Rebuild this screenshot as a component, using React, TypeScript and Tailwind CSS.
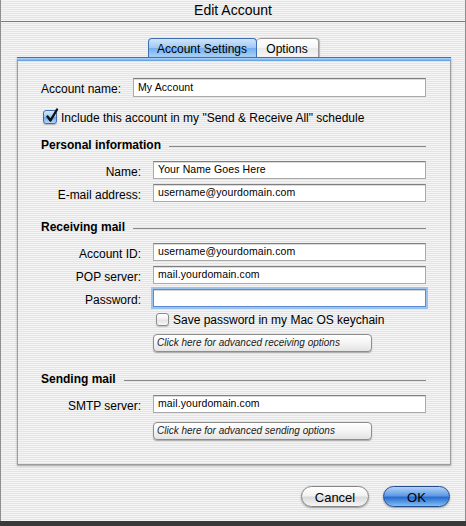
import React from "react";

function Field({ value, wide, focus }: { value?: string; wide?: boolean; focus?: boolean }) {
  const base =
    "bg-white border pl-[4px] text-[10.5px] leading-[15px] tracking-[0.1px] whitespace-nowrap overflow-hidden";
  const size = wide ? "w-[293px] h-[19px] pt-[1px]" : "w-[273px] h-[18px]";
  const look = focus
    ? "border-[#5a8ad0] shadow-[0_0_0_2px_#9cc3ee,inset_0_1px_0_#d5d5d5]"
    : "border-[#aaaaaa] border-t-[#7f7f7f] shadow-[inset_0_1px_0_#dcdcdc]";
  return <div className={`${base} ${size} ${look}`}>{value}</div>;
}

function Row({ label, children }: { label: string; children: React.ReactNode }) {
  return (
    <div className="flex items-center">
      <div className="w-[100px] text-right text-[12px] leading-[14px] pt-[3px]">{label}</div>
      <div className="ml-[12px]">{children}</div>
    </div>
  );
}

function Header({ text }: { text: string }) {
  return (
    <div className="flex items-center w-[385px] h-[14px]">
      <div className="text-[12px] font-bold leading-[14px] whitespace-nowrap pt-[1px]">{text}</div>
      <div className="flex-1 ml-[8px] mt-[5px] border-t border-[#8a8a8a]" />
    </div>
  );
}

function CheckedBox() {
  return (
    <div className="relative w-[14px] h-[14px] rounded-[3px] border border-[#3f6eae] bg-[linear-gradient(180deg,#d6e9fc_0%,#a3cbf3_45%,#6fa9ea_55%,#b6d9f9_100%)] shadow-[0_1px_1px_rgba(0,0,0,0.25)]">
      <svg className="absolute left-[1px] top-[-3px]" width="14" height="15" viewBox="0 0 14 15">
        <path d="M2.5 8.5 L5.5 12.5 L12 1.5" fill="none" stroke="#111" strokeWidth="2.4" strokeLinecap="round" strokeLinejoin="round" />
      </svg>
    </div>
  );
}

function EmptyBox() {
  return (
    <div className="w-[13px] h-[13px] rounded-[3px] border border-[#8c8c8c] bg-[linear-gradient(180deg,#ffffff_0%,#f1f1f1_45%,#e3e3e3_55%,#f8f8f8_100%)] shadow-[0_1px_1px_rgba(0,0,0,0.2)]" />
  );
}

function BevelButton({ text }: { text: string }) {
  return (
    <div className="w-[219px] h-[18px] rounded-[4px] border border-[#8d8d8d] bg-[linear-gradient(180deg,#ffffff_0%,#f4f4f4_50%,#e4e4e4_100%)] shadow-[0_1px_1px_rgba(0,0,0,0.3)] pl-[3px] text-[10px] italic leading-[16px] text-[#1a1a1a] whitespace-nowrap">
      {text}
    </div>
  );
}

export default function App() {
  const stripes =
    "bg-[image:repeating-linear-gradient(180deg,#f5f5f5_0px,#f5f5f5_1px,#e4e4e4_1px,#e4e4e4_2px)]";
  return (
    <div className="w-[466px] h-[526px] overflow-hidden bg-[#3a3a3a] font-['Liberation_Sans',Arial,sans-serif] text-black">
      <div className={`h-[521px] flex flex-col border-l border-r border-[#8e8e8e] ${stripes}`}>
        {/* Title bar */}
        <div className="h-[22px] shrink-0 border-b border-[#7a7a7a] flex items-center justify-center text-[14px] leading-[16px] pb-[1px]">
          Edit Account
        </div>

        {/* Tabs */}
        <div className="mt-[16px] h-[19px] flex justify-center">
          <div className="w-[109px] h-[19px] rounded-t-[4px] border border-b-0 border-[#3f6fb2] bg-[linear-gradient(180deg,#cfe5fc_0%,#a0c9f4_48%,#74afee_52%,#a9d3f8_100%)] flex items-center justify-center text-[12px] leading-[14px] pt-[1px]">
            Account Settings
          </div>
          <div className="w-[62px] h-[19px] rounded-t-[4px] border border-b-0 border-l-0 border-[#9a9a9a] bg-[linear-gradient(180deg,#ffffff_0%,#f6f6f6_48%,#e9e9e9_52%,#f7f7f7_100%)] shadow-[1px_0_1px_rgba(0,0,0,0.25)] flex items-center justify-center text-[12px] leading-[14px] pt-[1px]">
            Options
          </div>
        </div>

        {/* Pane */}
        <div className="ml-[16px] w-[434px] h-[408px] flex flex-col shadow-[0_1px_2px_rgba(0,0,0,0.3)]">
          <div className="h-[4px] shrink-0 border-t border-[#3f72b8] bg-[linear-gradient(180deg,#b3d6f8_0%,#7fb5ef_60%,#5c98df_100%)]" />
          <div className="flex-1 border border-t-0 border-[#9c9c9c] pl-[23px] flex flex-col">
            {/* Account name */}
            <div className="mt-[17px] flex items-center">
              <div className="w-[79px] text-right text-[12px] leading-[14px] pt-[3px] whitespace-nowrap">Account name:</div>
              <div className="ml-[13px]">
                <Field value="My Account" wide />
              </div>
            </div>

            {/* Include checkbox */}
            <div className="mt-[13px] ml-[2px] flex items-center h-[14px]">
              <CheckedBox />
              <div className="ml-[4px] text-[12px] leading-[14px] whitespace-nowrap pt-[1px]">
                Include this account in my "Send &amp; Receive All" schedule
              </div>
            </div>

            {/* Personal information */}
            <div className="mt-[13px]">
              <Header text="Personal information" />
            </div>
            <div className="mt-[10px]">
              <Row label="Name:">
                <Field value="Your Name Goes Here" />
              </Row>
            </div>
            <div className="mt-[5px]">
              <Row label="E-mail address:">
                <Field value="username@yourdomain.com" />
              </Row>
            </div>

            {/* Receiving mail */}
            <div className="mt-[17px]">
              <Header text="Receiving mail" />
            </div>
            <div className="mt-[10px]">
              <Row label="Account ID:">
                <Field value="username@yourdomain.com" />
              </Row>
            </div>
            <div className="mt-[5px]">
              <Row label="POP server:">
                <Field value="mail.yourdomain.com" />
              </Row>
            </div>
            <div className="mt-[5px]">
              <Row label="Password:">
                <Field focus />
              </Row>
            </div>
            <div className="mt-[6px] ml-[115px] flex items-center h-[13px]">
              <EmptyBox />
              <div className="ml-[4px] text-[12px] leading-[14px] whitespace-nowrap pt-[1px]">
                Save password in my Mac OS keychain
              </div>
            </div>
            <div className="mt-[8px] ml-[112px]">
              <BevelButton text="Click here for advanced receiving options" />
            </div>

            {/* Sending mail */}
            <div className="mt-[19px]">
              <Header text="Sending mail" />
            </div>
            <div className="mt-[10px]">
              <Row label="SMTP server:">
                <Field value="mail.yourdomain.com" />
              </Row>
            </div>
            <div className="mt-[9px] ml-[112px]">
              <BevelButton text="Click here for advanced sending options" />
            </div>
          </div>
        </div>

        {/* Buttons */}
        <div className="mt-[21px] pr-[15px] flex justify-end gap-[14px]">
          <div className="w-[68px] h-[21px] rounded-full border border-[#858585] bg-[linear-gradient(180deg,#ffffff_0%,#f2f2f2_45%,#dadada_55%,#f6f6f6_100%)] shadow-[0_1px_2px_rgba(0,0,0,0.35)] flex items-center justify-center text-[13px] leading-[15px] pt-[1px]">
            Cancel
          </div>
          <div className="w-[67px] h-[21px] rounded-full border border-[#234d8e] bg-[linear-gradient(180deg,#b4d3f7_0%,#5f9be6_45%,#2a6ccf_55%,#7fc0f7_100%)] shadow-[0_1px_2px_rgba(0,0,0,0.35)] flex items-center justify-center text-[13px] leading-[15px] pt-[1px]">
            OK
          </div>
        </div>
      </div>
    </div>
  );
}
